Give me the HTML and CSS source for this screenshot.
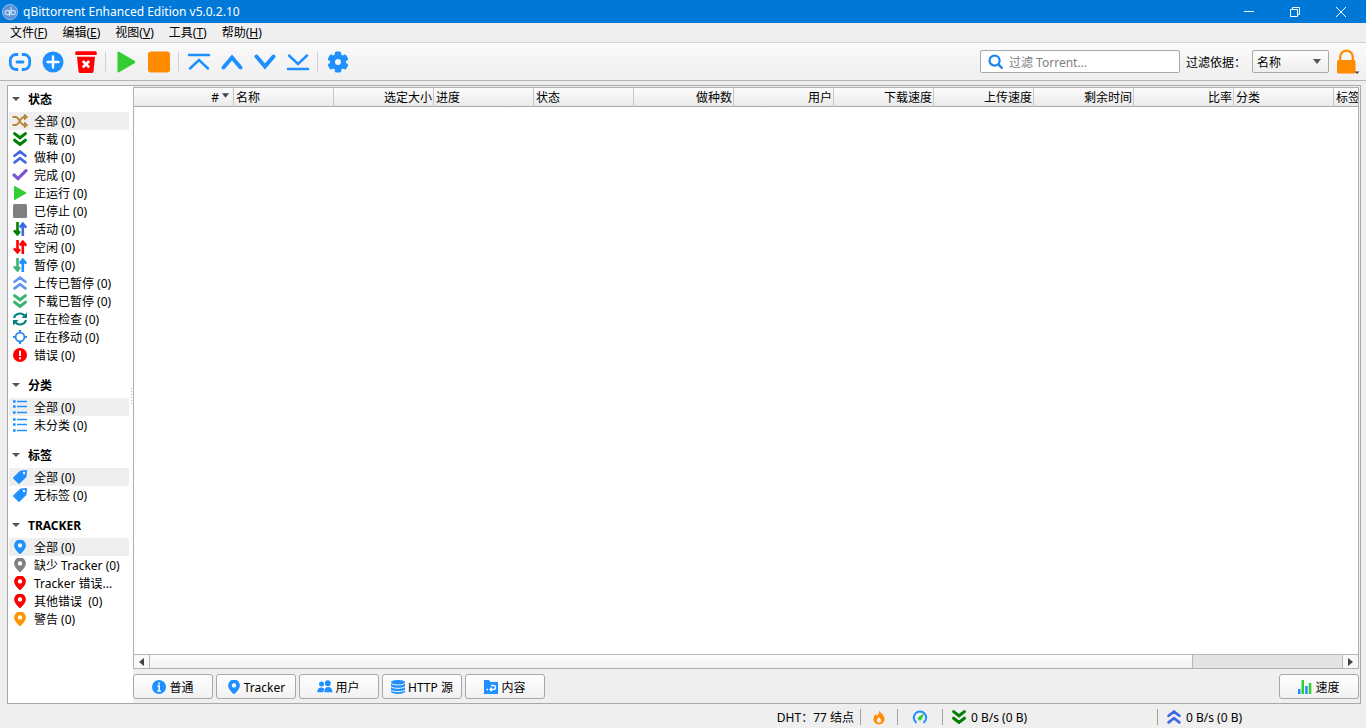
FILE: index.html
```html
<!DOCTYPE html>
<html lang="zh-CN">
<head>
<meta charset="utf-8">
<title>qBittorrent Enhanced Edition v5.0.2.10</title>
<link rel="stylesheet" href="styles.css">
</head>
<body>
<svg class="sprite" aria-hidden="true">
  <symbol id="double-down" viewBox="0 0 14 14"><path d="M1.600 1.600 7 5.800l5.400-4.200M1.600 8.200 7 12.400l5.400-4.200" fill="none" stroke="currentColor" stroke-width="3" stroke-linecap="round" stroke-linejoin="miter"/></symbol>
  <symbol id="double-up" viewBox="0 0 14 14"><path d="M1.600 5.800 7 1.600l5.400 4.200M1.600 12.400 7 8.200l5.400 4.200" fill="none" stroke="currentColor" stroke-width="2.700" stroke-linecap="round" stroke-linejoin="miter"/></symbol>
  <symbol id="play" viewBox="0 0 14 14"><path d="M1 .8C1 0 1.600-.2 2.200.2l10.600 6c.7.4.7 1.200 0 1.600l-10.600 6c-.6.4-1.200.2-1.200-.6z" fill="currentColor"/></symbol>
  <symbol id="list" viewBox="0 0 14 14"><path d="M4 1.500h10M4 6.500h10M4 12.500h10" stroke="currentColor" stroke-width="1.700"/><path d="M0 1.500h2.600M0 6.500h2.600M0 12.500h2.600" stroke="currentColor" stroke-width="2.400"/></symbol>
  <symbol id="tag" viewBox="0 0 14 14"><path fill-rule="evenodd" d="M8 .6 13 0q1 0 1 1l-.4 5q0 .7-.5 1.200L7 13.300q-1 1-2 0L.6 9q-1-1 0-2L6.700 1.200Q7.200.7 8 .6zM11 1.800a1.200 1.200 0 1 0 0 2.400 1.200 1.200 0 0 0 0-2.400z" fill="currentColor"/></symbol>
  <symbol id="pin" viewBox="0 0 14 14"><path fill-rule="evenodd" d="M7-.5a5.900 5.900 0 0 1 5.900 5.900C12.900 8.800 9 12.200 7 14.500 5 12.200 1.100 8.800 1.100 5.400A5.900 5.900 0 0 1 7-.5zm0 3.700a2.200 2.200 0 1 0 0 4.400 2.200 2.200 0 0 0 0-4.400z" fill="currentColor"/></symbol>
  <symbol id="arrow-down" viewBox="0 0 14 14"><path d="M4.500 0v10M1 8.300l3.500 4 2.400-3" fill="none" stroke="currentColor" stroke-width="2.600"/></symbol>
  <symbol id="arrow-up" viewBox="0 0 14 14"><path d="M9.800 14V3M6.800 5.300l3-3.600 3.500 4" fill="none" stroke="currentColor" stroke-width="2.600"/></symbol>
</svg>

<div class="window">
  <header class="titlebar">
    <svg class="app-icon" viewBox="0 0 18 18"><circle cx="9" cy="9" r="7.600" fill="#5a93d6" stroke="#8dbbe8" stroke-width="1"/><g fill="none" stroke="#c4dcf6" stroke-width="1.200"><circle cx="6.300" cy="9.500" r="2.200"/><path d="M8.500 7v6.500M10 4v7.500"/><circle cx="12.200" cy="9.500" r="2.200"/></g></svg>
    <h1 class="title">qBittorrent Enhanced Edition v5.0.2.10</h1>
    <div class="window-buttons">
      <button aria-label="最小化"><svg viewBox="0 0 12 12"><path d="M1 5.500h10"/></svg></button>
      <button aria-label="还原"><svg viewBox="0 0 12 12"><path d="M1.500 3.500h7v7h-7zM3.500 3.500v-2h7v7h-2"/></svg></button>
      <button aria-label="关闭"><svg viewBox="0 0 12 12"><path d="m1 1 10 10M11 1 1 11"/></svg></button>
    </div>
  </header>

  <nav class="menubar">
    <button>文件(<u>F</u>)</button><button>编辑(<u>E</u>)</button><button>视图(<u>V</u>)</button><button>工具(<u>T</u>)</button><button>帮助(<u>H</u>)</button>
  </nav>

  <div class="toolbar">
    <button class="tool" aria-label="添加链接"><svg viewBox="0 0 24 24"><path d="M10.200 4.500H8a5.700 5.700 0 0 0-5.700 5.700v3.600A5.700 5.700 0 0 0 8 19.500h2.200M13.800 4.500H16a5.700 5.700 0 0 1 5.700 5.700v3.600a5.700 5.700 0 0 1-5.700 5.700h-2.200" fill="none" stroke="#1e90ff" stroke-width="2.800"/><path d="M9 12h6" stroke="#1e90ff" stroke-width="2.800" stroke-linecap="round"/></svg></button>
    <button class="tool" aria-label="添加文件"><svg viewBox="0 0 24 24"><circle cx="12" cy="12" r="10.500" fill="#1e90ff"/><path d="M6.500 12h11M12 6.500v11" stroke="#fff" stroke-width="2.400" stroke-linecap="round"/></svg></button>
    <button class="tool" aria-label="删除"><svg viewBox="0 0 24 24"><path d="M2.500 1.200h19q1.200 0 1.200 1.200V5H1.300V2.400q0-1.200 1.200-1.200zM3 6.700h18l-1.500 14.800q-.2 1.500-1.700 1.500H6.200q-1.500 0-1.700-1.500z" fill="red"/><path d="m8.800 11 6.400 6.400m0-6.400-6.400 6.400" stroke="#fff" stroke-width="2.600"/></svg></button>
    <span class="divider"></span>
    <button class="tool" aria-label="开始"><svg viewBox="0 0 24 24"><path d="M3.500 2.500Q3.500 1 5 1.800l15.500 9q1.800 1.200 0 2.400l-15.500 9q-1.500.8-1.500-.7z" fill="#32cd32"/></svg></button>
    <button class="tool" aria-label="停止"><svg viewBox="0 0 24 24"><rect x="1" y="1.500" width="22" height="21" rx="3" fill="#ff8c00"/></svg></button>
    <span class="divider"></span>
    <button class="tool" aria-label="移到顶部"><svg class="stroke" viewBox="0 0 24 24"><path d="M2 5h20M3 18.500l9-8.500 9 8.500" stroke-width="2.500"/></svg></button>
    <button class="tool" aria-label="上移"><svg class="stroke" viewBox="0 0 24 24"><path d="m3.500 17.500 8.500-10 8.500 10" stroke-width="4"/></svg></button>
    <button class="tool" aria-label="下移"><svg class="stroke" viewBox="0 0 24 24"><path d="m3.500 6.500 8.500 10 8.500-10" stroke-width="4"/></svg></button>
    <button class="tool" aria-label="移到底部"><svg class="stroke" viewBox="0 0 24 24"><path d="M2 19h20M3 5.500l9 8.500 9-8.500" stroke-width="2.500"/></svg></button>
    <span class="divider"></span>
    <button class="tool" aria-label="选项"><svg viewBox="0 0 24 24"><g fill="#1e90ff"><circle cx="12" cy="12" r="8"/><rect x="8.800" y="1.500" width="6.400" height="21" rx="1.500"/><rect x="8.800" y="1.500" width="6.400" height="21" rx="1.500" transform="rotate(60 12 12)"/><rect x="8.800" y="1.500" width="6.400" height="21" rx="1.500" transform="rotate(120 12 12)"/></g><circle cx="12" cy="12" r="3" fill="#f4f4f4"/></svg></button>

    <label class="search">
      <svg viewBox="0 0 16 16"><circle cx="7" cy="7" r="5.400" fill="none" stroke="#1e86ee" stroke-width="2.400"/><path d="m11 11 3.700 3.700" stroke="#1e86ee" stroke-width="2.600" stroke-linecap="round"/></svg>
      <input type="text" placeholder="过滤 Torrent..." aria-label="过滤 Torrent">
    </label>
    <label class="filter-label" for="filter-by">过滤依据：</label>
    <div class="select-box">
      <select id="filter-by"><option>名称</option></select>
      <svg viewBox="0 0 8 5"><path d="M0 0h8L4 5z" fill="#555"/></svg>
    </div>
    <button class="lock" aria-label="锁定"><svg viewBox="0 0 24 24"><path d="M5.200 11V7a6.300 6.300 0 0 1 12.600 0v4" fill="none" stroke="#ff8c00" stroke-width="2.300"/><rect x="2" y="10" width="18.500" height="13.500" rx="1.500" fill="#ff8c00"/><path d="M19.500 21.500h5L22 24z" fill="#444"/></svg></button>
  </div>

  <main class="workspace">
    <aside class="sidebar">
      <section>
        <h2>状态</h2>
        <ul>
          <li class="selected"><svg viewBox="0 0 14 14"><g fill="none" stroke="#b8863b" stroke-width="1.800"><path d="M-.5 3h3C6.500 3 7 11 11 11h2M-.5 11h3C6.500 11 7 3 11 3h2"/><path d="m11 .5 2.800 2.500L11 5.500M11 8.500l2.800 2.500-2.800 2.500"/></g></svg>全部 (0)</li>
          <li><svg class="green"><use href="#double-down"/></svg>下载 (0)</li>
          <li><svg class="royal"><use href="#double-up"/></svg>做种 (0)</li>
          <li><svg viewBox="0 0 14 14"><path d="M1 7 5 10.600 13 2.600" fill="none" stroke="#7f52d4" stroke-width="3.200" stroke-linecap="round"/></svg>完成 (0)</li>
          <li><svg class="lime"><use href="#play"/></svg>正运行 (0)</li>
          <li><svg viewBox="0 0 14 14"><rect width="14" height="14" rx="1.500" fill="#808080"/></svg>已停止 (0)</li>
          <li><svg><use href="#arrow-down" class="green"/><use href="#arrow-up" class="royal"/></svg>活动 (0)</li>
          <li><svg class="red"><use href="#arrow-down"/><use href="#arrow-up"/></svg>空闲 (0)</li>
          <li><svg><use href="#arrow-down" class="sea"/><use href="#arrow-up" class="blue"/></svg>暂停 (0)</li>
          <li><svg class="pale"><use href="#double-up"/></svg>上传已暂停 (0)</li>
          <li><svg class="sea"><use href="#double-down"/></svg>下载已暂停 (0)</li>
          <li><svg viewBox="0 0 14 14"><g fill="none" stroke="#008080" stroke-width="2"><path d="M1 6a6 5.500 0 0 1 10.500-2.500M13 8a6 5.500 0 0 1-10.500 2.500"/></g><path d="M14 .5V6H8.500zM0 13.500V8h5.500z" fill="#008080"/></svg>正在检查 (0)</li>
          <li><svg viewBox="0 0 14 14"><circle cx="7" cy="7" r="4.400" fill="none" stroke="#2b8bea" stroke-width="1.800"/><path d="M7 0v3M7 11v3M0 7h3M11 7h3" stroke="#2b8bea" stroke-width="2.200"/></svg>正在移动 (0)</li>
          <li><svg viewBox="0 0 14 14"><circle cx="7" cy="7" r="7" fill="red"/><path d="M7 2.800v5.200M7 9.300v2" stroke="#fff" stroke-width="2"/></svg>错误 (0)</li>
        </ul>
      </section>
      <section>
        <h2>分类</h2>
        <ul>
          <li class="selected"><svg class="blue"><use href="#list"/></svg>全部 (0)</li>
          <li><svg class="blue"><use href="#list"/></svg>未分类 (0)</li>
        </ul>
      </section>
      <section>
        <h2>标签</h2>
        <ul>
          <li class="selected"><svg class="blue"><use href="#tag"/></svg>全部 (0)</li>
          <li><svg class="blue"><use href="#tag"/></svg>无标签 (0)</li>
        </ul>
      </section>
      <section>
        <h2>TRACKER</h2>
        <ul>
          <li class="selected"><svg class="blue"><use href="#pin"/></svg>全部 (0)</li>
          <li><svg class="gray"><use href="#pin"/></svg>缺少 Tracker (0)</li>
          <li><svg class="red"><use href="#pin"/></svg>Tracker 错误...</li>
          <li><svg class="red"><use href="#pin"/></svg>其他错误&nbsp;&nbsp;(0)</li>
          <li><svg class="orange"><use href="#pin"/></svg>警告 (0)</li>
        </ul>
      </section>
      <span class="grip"></span>
    </aside>

    <div class="content">
      <div class="list-frame">
        <div class="table-view">
          <table>
            <thead><tr>
              <th class="num"># <svg class="sort" viewBox="0 0 8 5"><path d="M0 0h8L4 5z" fill="#444"/></svg></th>
              <th>名称</th><th class="num">选定大小</th><th>进度</th><th>状态</th><th class="num">做种数</th><th class="num">用户</th><th class="num">下载速度</th><th class="num">上传速度</th><th class="num">剩余时间</th><th class="num">比率</th><th>分类</th><th>标签</th>
            </tr></thead>
          </table>
        </div>
        <div class="scrollbar">
          <button aria-label="向左滚动"><svg viewBox="0 0 5 8"><path d="M5 0v8L0 4z" fill="#444"/></svg></button>
          <div class="track"><div class="thumb"></div></div>
          <button aria-label="向右滚动"><svg viewBox="0 0 5 8"><path d="M0 0v8l5-4z" fill="#444"/></svg></button>
        </div>
      </div>
      <div class="tabs">
        <button><svg viewBox="0 0 14 14"><circle cx="7" cy="7" r="7" fill="#1e90ff"/><path d="M7 2.500v2M5.500 6H7.200v5M5.300 11h3.600" fill="none" stroke="#fff" stroke-width="1.500"/></svg>普通</button>
        <button><svg class="blue"><use href="#pin"/></svg>Tracker</button>
        <button><svg viewBox="0 0 14 14"><g fill="#1e90ff"><circle cx="3.500" cy="4" r="2.500"/><circle cx="9.800" cy="3.200" r="2.900"/><path d="M-.7 12.300q0-4.800 4.200-4.800 2.200 0 3 1.800-1.200 1-1.200 3zM6.300 12.300q.2-5.300 4-5.300t4.200 5.300z"/></g></svg>用户</button>
        <button><svg viewBox="0 0 14 14"><path d="M0 2.500C0-.7 14-.7 14 2.500v9c0 3.200-14 3.200-14 0z" fill="#1e90ff"/><path d="M0 3c1 2.600 13 2.600 14 0M0 6.500c1 2.400 13 2.400 14 0M0 9.800c1 2.400 13 2.400 14 0" fill="none" stroke="#f7f7f7" stroke-width="1"/></svg>HTTP 源</button>
        <button><svg viewBox="0 0 14 14"><path d="M0 0h5l1.500 2H14v12H0z" fill="#1e90ff"/><path d="M7 5.500h2.500a2 2 0 0 1 0 4H6M7.700 7.800 6 9.500l1.700 1.700" fill="none" stroke="#fff" stroke-width="1.300"/><path d="M2.500 8.800H4v1.500H2.500z" fill="#fff"/></svg>内容</button>
        <button class="speed"><svg viewBox="0 0 14 14"><path d="M0 9h2.500v5H0zM7.200 6h2.500v8H7.200z" fill="#1e90ff"/><path d="M3.500 0H6v14H3.500zM10.800 3h2.500v11h-2.500z" fill="#32cd32"/></svg>速度</button>
      </div>
    </div>
  </main>

  <footer class="statusbar">
    <span class="dht">DHT：77 结点</span>
    <button class="cell flame" aria-label="连接状态"><svg viewBox="0 0 14 14"><path fill-rule="evenodd" d="M7.200-.3C7.500 3 12.500 4.500 12.500 9c0 3-2.300 5.300-5.500 5.300S1.500 12 1.500 9c0-2.400 1.200-4 2.500-5l.8 2C6.800 4.500 7.400 2 7.200-.3zM7 7C6 8.300 4.800 9 4.800 10.500a2.200 2.200 0 0 0 4.400 0C9.200 9 8 8.300 7 7z" fill="#ff8c00"/></svg></button>
    <button class="cell gauge" aria-label="备用速度限制"><svg viewBox="0 0 14 14"><path d="M3.500 12.800A6.200 6.200 0 1 1 10.500 12.800" fill="none" stroke="#1e90ff" stroke-width="2"/><path d="M11.300 3 8.700 9.300A2 2 0 1 1 5.600 7z" fill="#32cd32"/></svg></button>
    <button class="cell rate"><svg class="green"><use href="#double-down"/></svg>0 B/s (0 B)</button>
    <button class="cell rate"><svg class="royal"><use href="#double-up"/></svg>0 B/s (0 B)</button>
  </footer>
</div>
</body>
</html>
```

FILE: styles.css
```css
* { box-sizing: border-box; }

body {
  margin: 0;
  background: #efefef;
  color: #000;
  font: 12px/18px "Noto Sans", "Noto Sans CJK SC", sans-serif;
}

button, input, select { font: inherit; color: inherit; }
button { margin: 0; padding: 0; border: 0; background: none; }
svg { display: block; flex: none; overflow: visible; }
h1, h2, ul { margin: 0; padding: 0; font-size: 12px; }
ul { list-style: none; }
.sprite { position: absolute; width: 0; height: 0; }

.green { color: #008000; }
.royal { color: #4169e1; }
.lime { color: #32cd32; }
.red { color: #ff0000; }
.sea { color: #3cb371; }
.blue { color: #1e90ff; }
.pale { color: #6495ed; }
.gray { color: #808080; }
.orange { color: #ff9500; }

.window { display: flex; flex-direction: column; height: 100vh; }

/* Title bar */
.titlebar { display: flex; align-items: center; height: 23px; padding-left: 1px; background: #0078d7; color: #fff; }
.app-icon { width: 18px; height: 18px; }
.title { margin-left: 4px; font-weight: 400; }
.window-buttons { display: flex; margin-left: auto; }
.window-buttons button { display: grid; place-items: center; width: 46px; height: 22px; }
.window-buttons button:last-child { margin-right: 2px; }
.window-buttons svg { width: 12px; height: 12px; fill: none; stroke: #fff; stroke-width: 1; }

/* Menu bar */
.menubar { display: flex; gap: 15px; height: 20px; padding: 1px 0 0 10px; border-bottom: 1px solid #d2d2d2; }

/* Toolbar */
.toolbar { display: flex; align-items: center; height: 38px; padding: 0 7px 0 3px; border-bottom: 1px solid #b4b4b4; background: linear-gradient(#fafafa, #efefef); }
.tool { display: grid; place-items: center; width: 33px; height: 32px; }
.tool svg { width: 24px; height: 24px; }
.tool .stroke { fill: none; stroke: #1e90ff; stroke-linecap: round; stroke-linejoin: miter; }
.divider { width: 1px; height: 20px; margin: 0 3px; background: #d0d0d0; }
.search { display: flex; align-items: center; gap: 6px; width: 200px; height: 23px; margin-left: auto; padding: 0 7px; border: 1px solid #a8a8a8; border-radius: 2px; background: #fff; }
.search svg { width: 15px; height: 15px; }
.search input { flex: 1; min-width: 0; padding: 2px 0 0; border: 0; outline: 0; background: none; }
.search input::placeholder { color: #808080; opacity: 1; }
.filter-label { width: 66px; margin-left: 6px; padding-top: 2px; white-space: nowrap; }
.select-box { display: grid; align-items: center; width: 77px; height: 23px; border: 1px solid #a8a8a8; border-radius: 2px; background: linear-gradient(#fdfdfd, #eee); }
.select-box > * { grid-area: 1 / 1; }
.select-box select { width: 100%; height: 21px; padding: 2px 4px 0; border: 0; outline: 0; background: none; appearance: none; }
.select-box svg { width: 8px; height: 5px; margin-right: 7px; justify-self: end; pointer-events: none; }
.lock { margin-left: 6px; }
.lock svg { width: 24px; height: 24px; }

/* Workspace */
.workspace { display: flex; flex: 1; min-height: 0; margin: 4px 5px 0 7px; border: 1px solid #a8a8a8; }
.sidebar { position: relative; width: 125px; padding: 0 4px 0 1px; background: #fff; }
.sidebar section { margin-bottom: 8px; }
.sidebar h2 { display: flex; align-items: center; height: 26px; padding: 2px 0 0 3px; font-weight: 700; }
.sidebar h2::before { content: ""; margin: 0 8px 2px 0; border: 4px solid transparent; border-top-color: #555; border-bottom: 0; }
.sidebar li { display: flex; align-items: center; gap: 7px; height: 18px; padding: 2px 0 0 4px; white-space: nowrap; }
.sidebar li.selected { background: #efefef; }
.sidebar li svg, .tabs svg, .cell svg { width: 14px; height: 14px; margin-bottom: 2px; }
.grip { position: absolute; top: 49%; right: 1px; width: 1px; height: 18px; background: repeating-linear-gradient(#b0b0b0 0 1px, transparent 1px 3px); }

.content { display: flex; flex: 1; flex-direction: column; min-width: 0; padding: 1px 1px 4px 0; }
.list-frame { display: flex; flex: 1; flex-direction: column; min-height: 0; border: 1px solid #b0b0b0; background: #fff; }
.table-view { flex: 1; overflow: hidden; }
table { width: 1300px; table-layout: fixed; border-collapse: separate; border-spacing: 0; }
th { height: 19px; padding: 1px 2px 0; border-right: 1px solid #c8c8c8; border-bottom: 1px solid #a8a8a8; background: linear-gradient(#fcfcfc, #ebebeb); font-weight: 400; line-height: 17px; text-align: left; white-space: nowrap; }
th.num { padding-right: 1px; text-align: right; }
.sort { display: inline-block; width: 7px; height: 5px; margin-right: 3px; vertical-align: 4px; }

.scrollbar { display: flex; height: 14px; border-top: 1px solid #b8b8b8; background: #e4e4e4; }
.scrollbar button { display: grid; place-items: center; width: 15px; background: #f8f8f8; }
.scrollbar svg { width: 5px; height: 8px; }
.track { display: flex; flex: 1; border: solid #b8b8b8; border-width: 0 1px; }
.thumb { width: 87.5%; border-right: 1px solid #b8b8b8; background: linear-gradient(#fdfdfd, #f0f0f0); }

.tabs { display: flex; gap: 3px; padding-top: 5px; }
.tabs button { display: flex; align-items: center; justify-content: center; gap: 3px; width: 80px; height: 25px; padding-top: 2px; border: 1px solid #a8a8a8; border-radius: 3px; background: linear-gradient(#fff, #f1f1f1); white-space: nowrap; }
.tabs .speed { margin-left: auto; }

/* Status bar */
.statusbar { display: flex; align-items: center; justify-content: flex-end; height: 24px; padding-top: 2px; }
.dht { margin-right: 6px; padding-top: 2px; }
.cell { display: flex; align-items: center; height: 16px; padding-top: 2px; border-left: 1px solid #a0a0a0; white-space: nowrap; }
.flame { width: 37px; padding-left: 11px; }
.gauge { width: 45px; padding-left: 15px; }
.rate { gap: 5px; width: 215px; padding-left: 9px; }
.rate:last-child { width: 209px; }
```
